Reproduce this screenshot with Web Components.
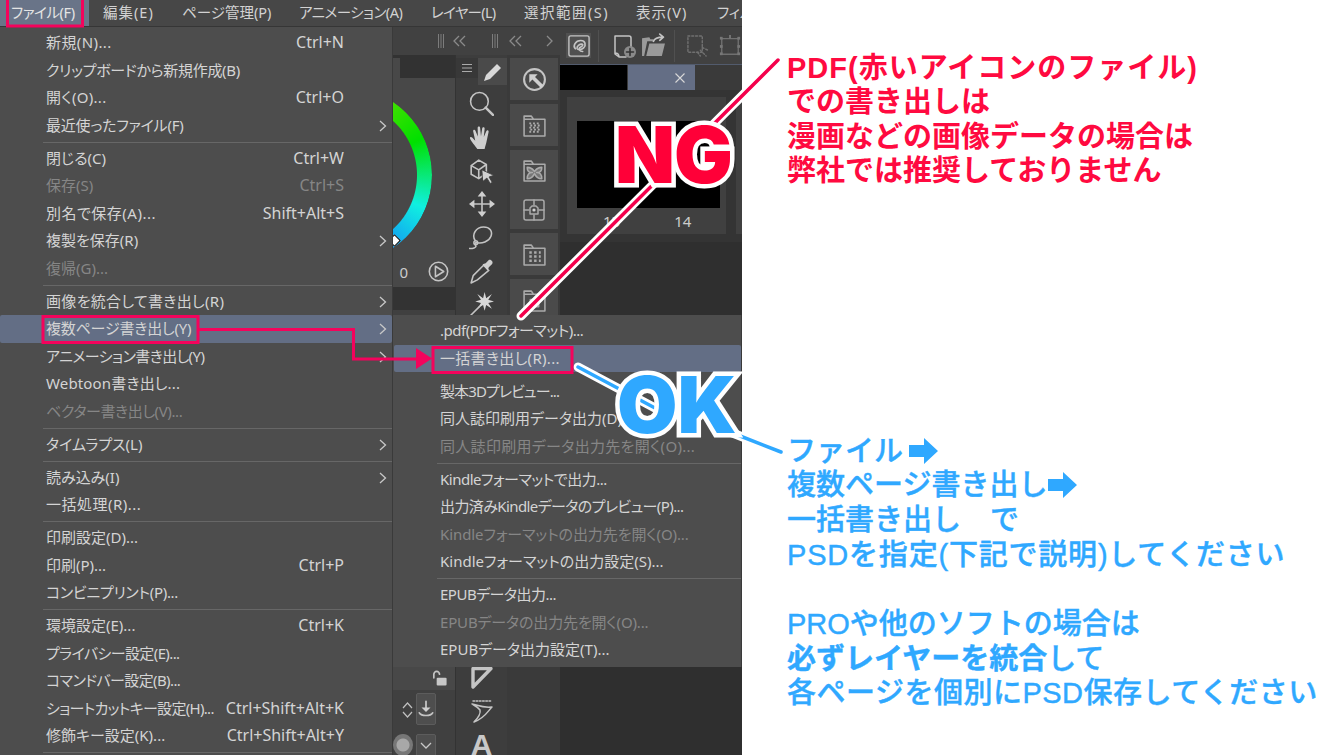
<!DOCTYPE html>
<html lang="ja">
<head>
<meta charset="utf-8">
<title>複数ページ書き出し</title>
<style>
  html, body { margin: 0; height: 100%; background: #fff; overflow: hidden; }
  body { font-family: "Noto Sans", "Noto Sans CJK JP", sans-serif; }
</style>
</head>
<body>
<guide-page>
  <app-window slot="app">
    <menu-bar slot="bar">
      <bar-item first active style="width:89px;letter-spacing:-.4px">ファイル(F)</bar-item>
      <bar-item style="width:79px;letter-spacing:1px">編集(E)</bar-item>
      <bar-item style="width:117px">ページ管理(P)</bar-item>
      <bar-item style="width:132px;letter-spacing:-.5px">アニメーション(A)</bar-item>
      <bar-item style="width:93px;letter-spacing:-.7px">レイヤー(L)</bar-item>
      <bar-item style="width:112px;letter-spacing:1.500px">選択範囲(S)</bar-item>
      <bar-item style="width:81px;letter-spacing:1px">表示(V)</bar-item>
      <bar-item>フィル</bar-item>
    </menu-bar>
    <work-area slot="work"></work-area>
    <pop-menu slot="main" style="left:0;top:27px;width:393px">
      <menu-row shortcut="Ctrl+N" style="letter-spacing:.4px">新規(N)...</menu-row>
      <menu-row style="letter-spacing:-.3px">クリップボードから新規作成(B)</menu-row>
      <menu-row shortcut="Ctrl+O" style="letter-spacing:.3px">開く(O)...</menu-row>
      <menu-row arrow style="letter-spacing:-.2px">最近使ったファイル(F)</menu-row>
      <menu-sep></menu-sep>
      <menu-row shortcut="Ctrl+W">閉じる(C)</menu-row>
      <menu-row shortcut="Ctrl+S" disabled>保存(S)</menu-row>
      <menu-row shortcut="Shift+Alt+S" style="letter-spacing:.5px">別名で保存(A)...</menu-row>
      <menu-row arrow>複製を保存(R)</menu-row>
      <menu-row disabled>復帰(G)...</menu-row>
      <menu-sep></menu-sep>
      <menu-row arrow style="letter-spacing:.3px">画像を統合して書き出し(R)</menu-row>
      <menu-row arrow active style="letter-spacing:-.2px">複数ページ書き出し(Y)</menu-row>
      <menu-row arrow style="letter-spacing:-.6px">アニメーション書き出し(Y)</menu-row>
      <menu-row style="letter-spacing:.15px">Webtoon書き出し...</menu-row>
      <menu-row disabled style="letter-spacing:-.4px">ベクター書き出し(V)...</menu-row>
      <menu-sep></menu-sep>
      <menu-row arrow>タイムラプス(L)</menu-row>
      <menu-sep></menu-sep>
      <menu-row arrow>読み込み(I)</menu-row>
      <menu-row style="letter-spacing:.5px">一括処理(R)...</menu-row>
      <menu-sep></menu-sep>
      <menu-row>印刷設定(D)...</menu-row>
      <menu-row shortcut="Ctrl+P">印刷(P)...</menu-row>
      <menu-row style="letter-spacing:-.3px">コンビニプリント(P)...</menu-row>
      <menu-sep></menu-sep>
      <menu-row shortcut="Ctrl+K">環境設定(E)...</menu-row>
      <menu-row style="letter-spacing:-.6px">プライバシー設定(E)...</menu-row>
      <menu-row style="letter-spacing:-.6px">コマンドバー設定(B)...</menu-row>
      <menu-row shortcut="Ctrl+Shift+Alt+K" style="letter-spacing:-.7px">ショートカットキー設定(H)...</menu-row>
      <menu-row shortcut="Ctrl+Shift+Alt+Y">修飾キー設定(K)...</menu-row>
      <menu-sep></menu-sep>
    </pop-menu>
    <pop-menu slot="main" style="left:392px;top:315px;width:350px;padding-bottom:3px;padding-left:1px;border-left:1px solid #3a3a3a">
      <menu-row style="letter-spacing:-.5px">.pdf(PDFフォーマット)...</menu-row>
      <menu-row style="letter-spacing:.3px" active>一括書き出し(R)...</menu-row>
      <menu-sep blank></menu-sep>
      <menu-row style="letter-spacing:-.9px">製本3Dプレビュー...</menu-row>
      <menu-row>同人誌印刷用データ出力(D)...</menu-row>
      <menu-row disabled style="letter-spacing:.3px">同人誌印刷用データ出力先を開く(O)...</menu-row>
      <menu-sep></menu-sep>
      <menu-row style="letter-spacing:-.5px">Kindleフォーマットで出力...</menu-row>
      <menu-row style="letter-spacing:-.6px">出力済みKindleデータのプレビュー(P)...</menu-row>
      <menu-row disabled style="letter-spacing:-.1px">Kindleフォーマットの出力先を開く(O)...</menu-row>
      <menu-row>Kindleフォーマットの出力設定(S)...</menu-row>
      <menu-sep></menu-sep>
      <menu-row style="letter-spacing:-.5px">EPUBデータ出力...</menu-row>
      <menu-row disabled style="letter-spacing:-.15px">EPUBデータの出力先を開く(O)...</menu-row>
      <menu-row>EPUBデータ出力設定(T)...</menu-row>
    </pop-menu>
  </app-window>
  <note-block slot="notes" tone="red" style="margin-top:51px;height:382.600px">
    <div style="letter-spacing:1px">PDF(赤いアイコンのファイル)</div>
    <div>での書き出しは</div>
    <div>漫画などの画像データの場合は</div>
    <div>弊社では推奨しておりません</div>
  </note-block>
  <note-block slot="notes" tone="blue">
    <div>ファイル<note-arrow style="margin-left:6px"></note-arrow></div>
    <div>複数ページ書き出し<note-arrow></note-arrow></div>
    <div>一括書き出し　で</div>
    <div style="letter-spacing:.8px">PSDを指定(下記で説明)してください</div>
    <div>&nbsp;</div>
    <div>PROや他のソフトの場合は</div>
    <div><b>必ずレイヤーを統合</b>して</div>
    <div style="letter-spacing:.5px">各ページを個別にPSD保存してください</div>
  </note-block>
  <call-outs slot="over"></call-outs>
</guide-page>

<script>
// icon bodies, all on a 24 box
const ICONS = {
  search: '<circle cx="10" cy="10" r="8.500"/><path d="M16 16l7 7" stroke-width="2.400"/>',
  hand: '<path fill="#cfcfcf" stroke="none" d="M8 23c-2-3-6-7-7-10-.5-1.500 1-2 2-1l3 3-2-9c-.3-1.600 1.700-2 2.200-.5L8.500 11 8.300 2.800c0-1.700 2.300-1.700 2.400 0l.8 8 1.200-7.600c.3-1.600 2.400-1.300 2.300.3l-.8 8 2.500-5.700c.6-1.400 2.500-.7 2.100.8L17 15c-.5 3-1.500 5-2 8z"/>',
  cube: '<path d="M2 7l7-5 7 4v8l-7 5-7-4z M2 7l7 4 7-5 M9 11v8"/><path fill="#cfcfcf" stroke="#3d3d3d" stroke-width=".8" d="M12 11l11 5-4.500 1.500 3 5-2 1-3-5-3.500 3z"/>',
  move: '<path d="M12 3v18M3 12h18"/><path fill="#cfcfcf" stroke="none" d="M12 0l4 5H8zM12 24l-4-5h8zM0 12l5-4v8zM24 12l-5 4v-8z"/>',
  lasso: '<path d="M6 15C2 9 7 2 14 2c6 0 9 4 7 9-2 5-9 7-13 6-2-.5-3 1-1.500 3 1 1.500-3.500 3-6 2.500"/><circle cx="6.500" cy="17" r="1.800"/>',
  dropper: '<path d="M14 6l5 5-11 9-6 3 2-7z"/><path fill="#cfcfcf" stroke="none" d="M13 5l3-1 3-3c2-1 5 2 3 4l-3 3-1 3z"/>',
  spark: '<path fill="#d8d8d8" stroke="none" d="M15 0l1.500 6L22 2l-3.500 5.500L24 9l-5.500 1.500L22 16l-5.500-3.500L15 18l-1.500-5.500L8 16l3.500-5.500L6 9l5.500-1.500L8 2l5.500 4z"/><path d="M10 14L1 23"/>',
  tri: '<path fill="#3d3d3d" stroke-width="3.400" d="M3 3.500H21L3 22z"/>',
  curve: '<path d="M3 2h19" stroke-dasharray="1.600 1.600"/><path d="M2 5c6 1 9 4 20 3-4 4-7 11-18 15 4-4 7-8 6-12C8 8 5 7 2 5z"/>',
  goal: '<circle cx="12" cy="12" r="10" stroke-width="2"/><path fill="#cfcfcf" stroke="none" d="M7 7h8l-2.500 2.500L21 18l-2.500 2.500L10 12l-3 3z"/>',
  dots: '<path d="M2 6V3h7l2 3h11v16H2z M2 6h20" stroke="#aaa"/><path stroke="#aaa" stroke-width="1.800" stroke-linecap="butt" stroke-dasharray="1.800 1.800" d="M7 10h10M8 12h10M7 14h10M8 16h10M7 18h10"/>',
  cross: '<path d="M2 6V3h7l2 3h11v16H2z M2 6h20" stroke="#aaa"/><path fill="#777" stroke="#aaa" d="M5 9c5 0 6 3 7 4 1-1 2-4 7-4 0 5-3 5-5 5 2 0 5 1 5 6-5 0-6-3-7-5-1 2-2 5-7 5 0-5 3-6 5-6-2 0-5 0-5-5z"/>',
  snap: '<rect x="2" y="2" width="20" height="20" rx="2" stroke="#aaa"/><path stroke="#aaa" d="M12 2v5M12 17v5M2 12h5M17 12h5"/><path stroke="#aaa" d="M8 10l2-2h4l2 2v6H8z"/><circle cx="12" cy="12" r="1.600" fill="#cfcfcf" stroke="none"/>',
  grid: '<path d="M2 6V3h7l2 3h11v16H2z M2 6h20" stroke="#aaa"/><path stroke="#aaa" stroke-width="2.400" stroke-linecap="butt" stroke-dasharray="2.400 2.200" d="M7 10h11M7 14h11M7 18h11"/>',
  folder: '<path d="M2 6V3h7l2 3h11v16H2z M2 6h20" stroke="#aaa"/><rect x="8" y="11" width="8" height="7" stroke="#aaa"/>',
  clip: '<rect x="1" y="1" width="22" height="22" rx="2"/><path stroke-width="1.800" d="M8 15c-3-3 0-9 6-9 5 0 6 5 3 8-2 2-6 3-7 1-1-3 3-5 5-5 2 0 1 2-1 3-4 2-1 5 2 5"/>',
  newdoc: '<path d="M3 2h14a2 2 0 0 1 2 2v12M3 2v18l4 3h7M3 19c2 0 4 1 4 4"/><circle cx="18" cy="18" r="6" fill="#8a8a8a" stroke="none"/><path stroke="#333" stroke-width="1.600" d="M18 14.500v7M14.500 18h7"/>',
  open: '<path fill="#9a9a9a" stroke="none" d="M1 22V5l7-1 1 2h3v2H6L3 22z M5 22l3-12h15l-3 12z"/><path stroke-width="1.600" d="M12 8c1-3 4-4 9-4M18 1l3.500 3-3.500 3"/>',
  dashed: '<rect x="2" y="2" width="15" height="17" stroke-dasharray="2 2"/><path stroke-dasharray="2 2" d="M17 14l6 3M15 17l6 6M12 19l3 4"/>',
  box: '<rect x="3" y="4" width="18" height="17"/><g fill="#777" stroke="none"><rect x="1" y="2" width="3" height="3"/><rect x="20" y="2" width="3" height="3"/><rect x="1" y="19" width="3" height="3"/><rect x="20" y="19" width="3" height="3"/><rect x="1" y="11" width="3" height="3"/><rect x="20" y="11" width="3" height="3"/><rect x="11" y="0" width="2" height="4"/></g>',
  play: '<circle cx="12" cy="12" r="10.500" stroke-width="1.800"/><path d="M8.500 6l9.500 6-9.500 6z" stroke-width="1.800"/>',
  lock: '<path d="M4 11V6a4 4 0 0 1 8 0" stroke-width="2.400"/><rect x="8" y="11" width="14" height="11" rx="1.500" fill="#c8c8c8" stroke="none"/>',
  save: '<path stroke-width="2.400" d="M12 2v10"/><path fill="#cfcfcf" stroke="none" d="M6 10h12l-6 6z"/><path stroke-width="2" d="M3 17c3 5 15 5 18 0"/>'
};

class ToolIcon extends HTMLElement {
  connectedCallback() {
    const name = this.getAttribute('name');
    const size = this.getAttribute('size') || 24;
    const color = this.getAttribute('color') || '#c4c4c4';
    this.attachShadow({ mode: 'open' }).innerHTML = `
      <style>:host{display:block;width:${size}px;height:${size}px;flex:none}svg{display:block;width:100%;height:100%}</style>
      <svg viewBox="0 0 24 24" fill="none" stroke="${color}" stroke-width="1.500" stroke-linejoin="round" stroke-linecap="round">${ICONS[name]}</svg>`;
  }
}
customElements.define('tool-icon', ToolIcon);

class GuidePage extends HTMLElement {
  constructor() {
    super();
    this.attachShadow({ mode: 'open' }).innerHTML = `
      <style>
        :host{display:flex;position:relative;width:1322px;height:755px;overflow:hidden;background:#fff}
        .notes{flex:1;padding-left:45px;display:flex;flex-direction:column}
      </style>
      <slot name="app"></slot>
      <div class="notes"><slot name="notes"></slot></div>
      <slot name="over"></slot>`;
  }
}
customElements.define('guide-page', GuidePage);

class AppWindow extends HTMLElement {
  constructor() {
    super();
    this.attachShadow({ mode: 'open' }).innerHTML = `
      <style>
        :host{display:flex;flex-direction:column;position:relative;width:742px;height:755px;flex:none;overflow:hidden;background:#3a3a3a}
      </style>
      <slot name="bar"></slot><slot name="work"></slot><slot name="main"></slot>`;
  }
}
customElements.define('app-window', AppWindow);

class MenuBar extends HTMLElement {
  constructor() {
    super();
    this.attachShadow({ mode: 'open' }).innerHTML = `
      <style>
        :host{display:flex;flex:none;height:26px;background:#474747;border-bottom:1px solid #363636;overflow:hidden;white-space:nowrap;
          font-size:14.500px;font-feature-settings:"palt";color:#d2d2d2}
      </style>
      <slot></slot>`;
  }
}
customElements.define('menu-bar', MenuBar);

class BarItem extends HTMLElement {
  constructor() {
    super();
    this.attachShadow({ mode: 'open' }).innerHTML = `
      <style>
        :host{display:block;flex:none;box-sizing:border-box;padding:0 0 0 14px;line-height:25px}
        :host([first]){padding-left:11px}
        :host([active]){background:#697488;color:#e4e4e4}
      </style>
      <slot></slot>`;
  }
}
customElements.define('bar-item', BarItem);

class PopMenu extends HTMLElement {
  constructor() {
    super();
    this.attachShadow({ mode: 'open' }).innerHTML = `
      <style>
        :host{display:block;position:absolute;box-sizing:border-box;padding-top:2.250px;background:#4d4d4d;
          border-right:1px solid #3a3a3a;font-size:15px;font-feature-settings:"palt";color:#d4d4d4}
      </style>
      <slot></slot>`;
  }
}
customElements.define('pop-menu', PopMenu);

class MenuRow extends HTMLElement {
  constructor() {
    super();
    const shortcut = this.getAttribute('shortcut');
    const arrow = this.hasAttribute('arrow');
    this.attachShadow({ mode: 'open' }).innerHTML = `
      <style>
        :host{display:flex;height:27.500px;line-height:27.500px;padding-left:46px;white-space:nowrap;border-radius:2px}
        :host([disabled]){color:#868686}
        :host([active]){background:#636e85}
        .label{flex:1;min-width:0}
        .key{font-size:16px;letter-spacing:0}
        .end{flex:none;width:48px;display:flex;align-items:center;justify-content:flex-end;padding-right:5px;box-sizing:border-box}
        svg{display:block}
      </style>
      <span class="label"><slot></slot></span>
      ${shortcut ? `<span class="key">${shortcut}</span>` : ''}
      <span class="end">${arrow ? '<svg width="8" height="12" viewBox="0 0 8 12" fill="none" stroke="#c8c8c8" stroke-width="1.300"><path d="M1 1l5.500 5L1 11"/></svg>' : ''}</span>`;
  }
}
customElements.define('menu-row', MenuRow);

class MenuSep extends HTMLElement {
  constructor() {
    super();
    this.attachShadow({ mode: 'open' }).innerHTML = `
      <style>
        :host{display:flex;align-items:center;height:5.500px;padding-left:43px}
        i{display:block;flex:1;height:1px;background:#676767}
        :host([blank]) i{background:transparent}
      </style><i></i>`;
  }
}
customElements.define('menu-sep', MenuSep);

class WorkArea extends HTMLElement {
  constructor() {
    super();
    const icon = (n, s) => `<tool-icon name="${n}" size="${s || 24}"></tool-icon>`;
    const grip = '<svg width="8" height="14" viewBox="0 0 8 14" stroke="#7c7c7c"><path d="M1.500 0v14M4 0v14M6.500 0v14"/></svg>';
    const twin = '<svg width="13" height="12" viewBox="0 0 13 12" fill="none" stroke="#8a8a8a" stroke-width="1.300"><path d="M6 1L1 6l5 5M12 1L7 6l5 5"/></svg>';
    const one = '<svg width="7" height="12" viewBox="0 0 7 12" fill="none" stroke="#8a8a8a" stroke-width="1.300"><path d="M1 1l5 5-5 5"/></svg>';
    this.attachShadow({ mode: 'open' }).innerHTML = `
      <style>
        :host{display:flex;flex:1;min-height:0;color:#cccccc;font-size:15px}
        svg{display:block;flex:none}
        .dock{width:560px;flex:none;display:flex;flex-direction:column}
        .title{height:28px;flex:none;background:#414141;display:flex;align-items:center;justify-content:flex-end;padding-right:7px}
        .cols{flex:1;display:flex;min-height:0}
        .color{width:455px;flex:none;display:flex;flex-direction:column;background:#404040}
        .color .head{height:23px;flex:none;background:#323232;display:flex}
        .color .head i{width:400px;background:#484848;display:block;margin-top:3px}
        .wheelbox{height:209px;flex:none;background:#484848;position:relative;overflow:hidden}
        .wheel{width:176px;height:176px;margin:9px 0 0 256px;border-radius:50%;
          background:conic-gradient(#f0e000 0deg,#50e000 25deg,#00e000 65deg,#10f0e0 112deg,#12a8f0 142deg,#2040f0 190deg,#a020f0 260deg,#f02020 320deg,#f0e000 360deg);
          -webkit-mask:radial-gradient(circle closest-side,transparent 72.500px,#000 73.500px);mask:radial-gradient(circle closest-side,transparent 72.500px,#000 73.500px)}
        .mark{position:absolute;left:390px;top:158px;width:7px;height:7px;background:#fff;border:1px solid #000;transform:rotate(45deg)}
        .foot{position:absolute;right:6px;bottom:5px;display:flex;align-items:flex-end;gap:20px;font-size:15px;line-height:20px}
        .strip{height:23px;flex:none;background:#333}
        .gap{flex:1}
        .low{height:89px;flex:none;background:#404040}
        .lockrow{height:24px;background:#484848;display:flex;justify-content:flex-end;padding:0 7px 0 0;align-items:center}
        .lowrow{display:flex;justify-content:flex-end;padding:3px 19px 0 0;gap:3px;align-items:flex-start}
        .btn{width:20px;height:32px;background:#4e4e4e;border:1px solid #5c5c5c;box-sizing:border-box;display:flex;align-items:center;justify-content:center;border-radius:2px}
        .ud{margin-top:9px}
        .knob{display:flex;justify-content:flex-end;padding:9px 19px 0 0;gap:3px}
        .knob b{display:block;width:20px;height:22px;border-radius:50%;background:radial-gradient(circle,#a8a8a8 0 6px,#777 7px 10px)}
        .tools{width:52px;flex:none;background:#3d3d3d;display:flex;flex-direction:column;align-items:center;border-left:1px solid #333;box-sizing:border-box}
        .tophead{width:100%;display:flex;height:32px;flex:none;margin-top:3px;margin-bottom:-3px}
        .burger{width:22px;height:20px;background:#383838;display:flex;align-items:center;justify-content:center}
        .pen{flex:1;height:27px;background:#4a4a4a;display:flex;justify-content:center;align-items:center}
        .tools .t{height:33.500px;flex:none;display:flex;align-items:center;justify-content:center}
        .tools .rest{height:339px;flex:none}
        .tools .a{font:700 30px "Liberation Sans",sans-serif;color:#c8c8c8;line-height:33px}
        .side{flex:1;background:#3a3a3a;display:flex;flex-direction:column;padding:3px 2px 0 3px;gap:4px}
        .card{background:#4a4a4a;display:flex;flex-direction:column;align-items:center;justify-content:space-around;height:42px;flex:none}
        .card.tall{height:79px}
        .main{flex:1;min-width:0;display:flex;flex-direction:column}
        .cmd{height:37px;flex:none;background:#414141;display:flex;align-items:center;padding-left:6px}
        .cmd .clip{width:25px;height:25px;background:#505050;display:flex;align-items:center;justify-content:center;flex:none}
        .cmd i{display:block;width:1px;height:32px;background:#505050;flex:none}
        .tabs{height:25px;flex:none;background:#3a3a3a;display:flex;border-top:1px solid #525b6d}
        .tab{width:67px;background:#000;flex:none}
        .tab.on{background:#646e85;margin-left:1px;display:flex;align-items:center;justify-content:flex-end;padding-right:10px;width:57px}
        .pages{flex:1;background:#2f2f2f;display:flex;flex-direction:column}
        .shelf{height:145px;background:#343434;flex:none;padding:7px 0 0 7px;display:flex;gap:10px;overflow:hidden}
        .page{width:159px;flex:none;height:137px;background:#404040;padding:24px 6px 0 10px;box-sizing:border-box}
        .page .ink{height:87px;background:#000}
        .page .num{display:flex;gap:54px;margin-top:3px;padding-left:26px}
      </style>
      <div class="dock">
        <div class="title">
          ${grip}<span style="width:8px"></span>${twin}<span style="width:25px"></span>
          ${grip}<span style="width:10px"></span>${twin}<span style="width:24px"></span>${one}
        </div>
        <div class="cols">
          <div class="color">
            <div class="head"><i></i></div>
            <div class="wheelbox">
              <div class="wheel"></div>
              <div class="mark"></div>
              <div class="foot"><span>0</span><tool-icon name="play" size="21"></tool-icon></div>
            </div>
            <div class="strip"></div>
            <div class="gap"></div>
            <div class="low">
              <div class="lockrow"><tool-icon name="lock" size="17"></tool-icon></div>
              <div class="lowrow"><svg class="ud" width="11" height="16" viewBox="0 0 11 16" fill="none" stroke="#c0c0c0" stroke-width="1.200"><path d="M1 6l4.500-5L10 6M1 10l4.500 5L10 10"/></svg><div class="btn">${icon('save', 18)}</div></div>
              <div class="knob"><b></b><div class="btn" style="height:24px"><svg width="12" height="8" viewBox="0 0 12 8" fill="none" stroke="#c8c8c8" stroke-width="1.300"><path d="M1 1l5 5 5-5"/></svg></div></div>
            </div>
          </div>
          <div class="tools">
            <div class="tophead">
              <div class="burger"><svg width="10" height="8" viewBox="0 0 10 8" stroke="#aaa"><path d="M0 .5h10M0 4h10M0 7.500h10"/></svg></div>
              <div class="pen"><svg width="20" height="20" viewBox="0 0 20 20"><path fill="#d8d8d8" d="M1 19l2-6L14 2l4 4L7 17z"/></svg></div>
            </div>
            <div class="t">${icon('search', 25)}</div>
            <div class="t">${icon('hand', 25)}</div>
            <div class="t">${icon('cube', 26)}</div>
            <div class="t">${icon('move', 26)}</div>
            <div class="t">${icon('lasso', 25)}</div>
            <div class="t">${icon('dropper', 25)}</div>
            <div class="t">${icon('spark', 25)}</div>
            <div class="rest"></div>
            <div class="t">${icon('tri', 24)}</div>
            <div class="t">${icon('curve', 24)}</div>
            <div class="t a">A</div>
          </div>
          <div class="side">
            <div class="card">${icon('goal', 25)}</div>
            <div class="card">${icon('dots', 25)}</div>
            <div class="card tall">${icon('cross', 25)}${icon('snap', 24)}</div>
            <div class="card">${icon('grid', 25)}</div>
            <div class="card">${icon('folder', 25)}</div>
          </div>
        </div>
      </div>
      <div class="main">
        <div class="cmd">
          <div class="clip">${icon('clip', 22)}</div>
          <i style="margin:0 13px 0 7px"></i>
          ${icon('newdoc', 24)}
          <span style="width:5px"></span>
          ${icon('open', 25)}
          <i style="margin:0 11px 0 8px"></i>
          <tool-icon name="dashed" size="23" color="#707070"></tool-icon>
          <span style="width:10px"></span>
          <tool-icon name="box" size="22" color="#707070"></tool-icon>
        </div>
        <div class="tabs">
          <div class="tab"></div>
          <div class="tab on"><svg width="10" height="10" viewBox="0 0 10 10" stroke="#d8d8d8" stroke-width="1.100"><path d="M.5.5l9 9M9.500.5l-9 9"/></svg></div>
        </div>
        <div class="pages">
          <div class="shelf">
            <div class="page"><div class="ink"></div><div class="num"><span>13</span><span>14</span></div></div>
            <div class="page"></div>
          </div>
        </div>
      </div>`;
  }
}
customElements.define('work-area', WorkArea);

class NoteBlock extends HTMLElement {
  constructor() {
    super();
    const red = this.getAttribute('tone') === 'red';
    this.attachShadow({ mode: 'open' }).innerHTML = `
      <style>
        :host{display:block;flex:none;white-space:nowrap;
          font-family:"Liberation Sans","Noto Sans CJK JP",sans-serif;
          font-size:29px;line-height:${red ? 34.4 : 34.7}px;
          font-weight:${red ? 700 : 500};color:${red ? '#ff0a40' : '#2fa8ff'};
          ${red ? '' : '-webkit-text-stroke:.4px #2fa8ff;'}}
        ::slotted(div){height:${red ? 34.4 : 34.7}px}
      </style>
      <slot></slot>`;
  }
}
customElements.define('note-block', NoteBlock);

class NoteArrow extends HTMLElement {
  constructor() {
    super();
    this.attachShadow({ mode: 'open' }).innerHTML = `
      <style>:host{display:inline-block;width:29px;height:26px;margin-left:1px;vertical-align:-3px}svg{display:block}</style>
      <svg width="29" height="26" viewBox="0 0 29 26"><path fill="#2fa8ff" d="M0 7h15V0l14 13-14 13v-7H0z"/></svg>`;
  }
}
customElements.define('note-arrow', NoteArrow);

class CallOuts extends HTMLElement {
  constructor() {
    super();
    this.attachShadow({ mode: 'open' }).innerHTML = `
      <style>
        :host{display:block;position:absolute;inset:0;pointer-events:none}
        svg{position:absolute;left:0;top:0}
        .big{position:absolute;font-family:Inter,"Liberation Sans",sans-serif;font-weight:900;font-size:78px;line-height:78px;
          -webkit-text-stroke:9px #fff;paint-order:stroke fill;stroke-linejoin:round}
        .ng{left:615px;top:116px;color:#ff0038;letter-spacing:-1px}
        .ok{left:617px;top:366px;color:#2fa8ff}
      </style>
      <svg width="1322" height="755" viewBox="0 0 1322 755" fill="none">
        <path d="M521 316L778 60" stroke="#fff" stroke-width="9" stroke-linecap="round"/>
        <path d="M521 316L778 60" stroke="#f4004c" stroke-width="3.500" stroke-linecap="round"/>
        <path d="M578 367L655 408M730 432L781 452" stroke="#fff" stroke-width="9" stroke-linecap="round"/>
        <path d="M578 367L655 408M730 432L781 452" stroke="#2fa8ff" stroke-width="3.500" stroke-linecap="round"/>
        <g stroke="#f4035c" stroke-width="3">
          <rect x="7.500" y="-2" width="75" height="28"/>
          <rect x="43" y="316.500" width="155" height="26"/>
          <rect x="433" y="347.500" width="139" height="25"/>
          <path d="M198 329.500H353.500V359H418"/>
        </g>
        <path fill="#f4035c" d="M416 348l16 10.500-16 10.500z"/>
      </svg>
      <div class="big ng">NG</div>
      <div class="big ok">OK</div>`;
  }
}
customElements.define('call-outs', CallOuts);
</script>
</body>
</html>
